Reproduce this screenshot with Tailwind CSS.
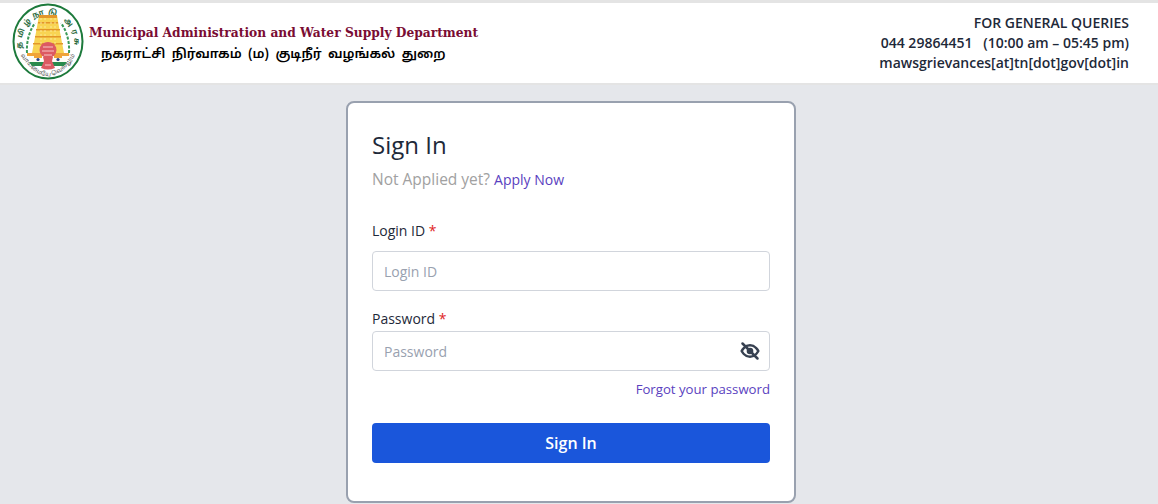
<!DOCTYPE html>
<html>
<head>
    <title>Sign In</title>
    <meta charset="utf-8">
    <script src="https://cdn.jsdelivr.net/npm/@tailwindcss/browser@4"></script>
</head>
<body class="h-[504px] overflow-hidden bg-gray-200 font-['Open_Sans','Noto_Sans',sans-serif]">
    <!-- Header -->
    <header class="h-[85px] bg-white border-t-[3px] border-b-2 border-[#e4e4e4] flex items-center justify-between pl-[12px] pr-[29px]">
        <div class="flex items-center">
            <svg width="72" height="78" viewBox="0 0 72 78" class="mt-[-2px]">
                <defs>
                    <path id="arcTop" d="M12 54 A26.5 30 0 1 1 60 54"/>
                    <path id="arcBottom" d="M8 51 Q36 95 64 51"/>
                </defs>
                <ellipse cx="36" cy="38.5" rx="34.5" ry="37" fill="#fff" stroke="#1d7a3c" stroke-width="2"/>
                <text class="font-['Noto_Sans_Tamil','Noto_Sans',sans-serif]" font-size="7.5" font-weight="700" fill="#2b6b40" letter-spacing="3.4" text-anchor="middle"><textPath href="#arcTop" startOffset="50%">தமிழ்நாடு அரசு</textPath></text>
                <text class="font-['Noto_Sans_Tamil','Noto_Sans',sans-serif]" font-size="6" fill="#555" letter-spacing="0.2" text-anchor="middle"><textPath href="#arcBottom" startOffset="50%">வாய்மையே வெல்லும்</textPath></text>
                <path d="M15 50 Q14 33 23 20 M57 50 Q58 33 49 20" fill="none" stroke="#3b9a58" stroke-width="2" stroke-dasharray="3 1.5"/>
                <path d="M27 12 H45 L47 24 L52 50 H20 L25 24 Z" fill="#f8d453"/>
                <path d="M27 12 H45 V15 H27 Z M26 19 H46 V20.5 H26 Z M24 26 H48 V27.5 H24 Z M23 33 H49 V34.5 H23 Z M21 40 H51 V41.5 H21 Z" fill="#e3962a"/>
                <path d="M29 15 V50 M33 15 V50 M39 15 V50 M43 15 V50" stroke="#fbe89a" stroke-width="1" stroke-dasharray="2 2"/>
                <path d="M15 50 H57 V53 H15 Z" fill="#f0a437"/>
                <path d="M17 53 H55 V60 H17 Z" fill="#fdfdf5"/>
                <path d="M17 59 H55 L52 63 H20 Z" fill="#2a8a4c"/>
                <path d="M22 53 H30 V55 H22 Z M42 53 H50 V55 H42 Z" fill="#f0a437"/>
                <circle cx="26" cy="56.5" r="1.6" fill="#27408b"/>
                <circle cx="46" cy="56.5" r="1.6" fill="#27408b"/>
                <ellipse cx="36" cy="47" rx="8.5" ry="8" fill="#dc5a62"/>
                <path d="M31 54 H41 L40 58 L43 65 Q36 68 29 65 L32 58 Z" fill="#dc5a62"/>
                <path d="M31 44 H41 M30 48 H42 M32 52 H40 M33 62 H39" stroke="#f7c6c8" stroke-width="1"/>
            </svg>
            <div class="ml-[5px] mt-[2px]">
                <div class="font-['DejaVu_Serif',serif] font-bold text-[12.25px] leading-[22px] text-[#7a0c33]">Municipal Administration and Water Supply Department</div>
                <div class="ml-[12px] font-['Noto_Sans_Tamil','Noto_Sans','DejaVu_Sans',sans-serif] text-[13.2px] font-semibold leading-[22px] [word-spacing:3px] text-black">நகராட்சி நிர்வாகம் (ம) குடிநீர் வழங்கல் துறை</div>
            </div>
        </div>
        <div class="text-right text-[14px] leading-[20px] font-semibold text-gray-800">
            <div>FOR GENERAL QUERIES</div>
            <div class="whitespace-pre">044 29864451   (10:00 am – 05:45 pm)</div>
            <div>mawsgrievances[at]tn[dot]gov[dot]in</div>
        </div>
    </header>

    <!-- Login card -->
    <main class="flex justify-center pr-4 pt-4">
        <form class="w-[450px] h-[402px] bg-white border-2 border-gray-400 rounded-lg px-6 pt-[26px]">
            <h1 class="text-2xl leading-8 font-medium text-gray-800">Sign In</h1>
            <p class="mt-[6px] text-[15.5px] leading-6 text-neutral-400">Not Applied yet? <a href="#" class="text-sm text-[#5a3fc0]">Apply Now</a></p>

            <label class="block mt-[30px] text-sm leading-5 font-medium text-gray-800" for="loginId">Login ID <span class="text-[#e02424]">*</span></label>
            <input id="loginId" type="text" placeholder="Login ID" class="mt-[10px] block w-full h-10 rounded border border-gray-300 px-[11px] text-sm placeholder:text-gray-400"/>

            <label class="block mt-[18px] text-sm leading-5 font-medium text-gray-800" for="password">Password <span class="text-[#e02424]">*</span></label>
            <div class="relative mt-[2px]">
                <input id="password" type="password" placeholder="Password" class="block w-full h-10 rounded border border-gray-300 px-[11px] text-sm placeholder:text-gray-400"/>
                <svg class="absolute right-[10px] top-[10px]" width="20" height="20" viewBox="0 0 24 24" fill="none" stroke="#374151" stroke-width="3" stroke-linecap="round" stroke-linejoin="round">
                    <path d="M2 12s3.6-7 10-7 10 7 10 7-3.6 7-10 7-10-7-10-7z"/>
                    <circle cx="12" cy="12" r="2.5" fill="#374151"/>
                    <path d="M3 3l18 18"/>
                </svg>
            </div>
            <div class="mt-[9px] text-right text-[13.2px] leading-[18px]"><a href="#" class="text-[#5a3fc0]">Forgot your password</a></div>

            <button type="button" class="mt-[25px] block w-full h-10 rounded-sm bg-[#1a56db] text-white text-base font-semibold">Sign In</button>
        </form>
    </main>
</body>
</html>
